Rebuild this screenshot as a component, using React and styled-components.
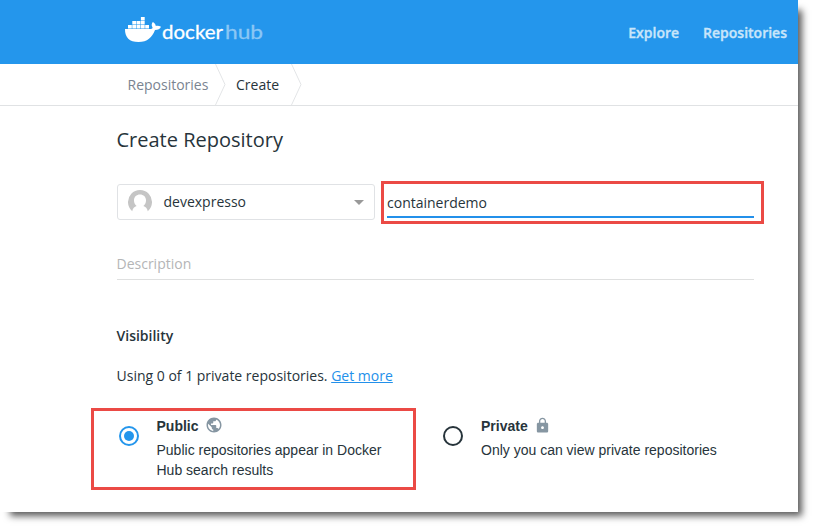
import React from "react";
import styled, { createGlobalStyle } from "styled-components";

const GlobalStyle = createGlobalStyle`
  * { box-sizing: border-box; }
  body { margin: 0; background: #fff; }
`;

const Canvas = styled.div`
  width: 813px;
  height: 527px;
  overflow: hidden;
  background: #fff;
`;

const Page = styled.div`
  width: 798px;
  height: 512px;
  background: #fff;
  box-shadow: 7px 7px 7px -3px rgba(0, 0, 0, 0.65);
  font-family: "Open Sans", "Noto Sans", sans-serif;
  font-size: 14px;
  line-height: 20px;
  color: #27343b;
`;

const Header = styled.header`
  display: flex;
  align-items: center;
  justify-content: space-between;
  height: 64px;
  padding: 0 11px 0 124px;
  background: #2496ec;
`;

const Logo = styled.svg`
  display: block;
  width: 142px;
  height: 32px;
`;

const Nav = styled.nav`
  display: flex;
  gap: 24px;
  padding-top: 2px;
`;

const NavLink = styled.a`
  font-weight: 600;
  color: #c8e5fa;
  -webkit-text-stroke: 0.35px #c8e5fa;
`;

const Breadcrumb = styled.div`
  display: flex;
  height: 42px;
  padding-left: 127.5px;
  border-bottom: 1px solid #e0e2e4;
`;

const Crumb = styled.a`
  display: flex;
  align-items: center;
  width: ${(p) => p.$width}px;
  color: ${(p) => (p.$active ? "#27343b" : "#7a8491")};
`;

const Chevron = styled.svg`
  display: block;
  width: 12px;
  height: 41px;
  margin-right: 9.5px;
`;

const Content = styled.main`
  padding: 22px 44px 0 117px;
`;

const Title = styled.h1`
  margin: 0 0 0 -0.5px;
  font-size: 20px;
  line-height: 24px;
  font-weight: 400;
`;

const NameRow = styled.div`
  display: flex;
  align-items: flex-start;
  gap: 6px;
  margin: 29px -10px 0 0;
`;

const Select = styled.div`
  display: flex;
  align-items: center;
  width: 258px;
  height: 36px;
  margin-top: 3px;
  padding: 0 10px;
  border: 1px solid #e0e2e5;
  border-radius: 3px;
`;

const Avatar = styled.svg`
  width: 24px;
  height: 24px;
  margin-right: 11.5px;
`;

const SelectValue = styled.span`
  flex: 1;
`;

const Arrow = styled.svg`
  width: 10px;
  height: 5px;
`;

const Highlight = styled.div`
  border: 3px solid #eb4a45;
  flex: 0 0 auto;
`;

const NameHighlight = styled(Highlight)`
  width: 383px;
  height: 43px;
  padding: 8px 7px 3px 3px;
`;

const NameInput = styled.div`
  height: 26px;
  padding-top: 1px;
  border-bottom: 2px solid #2390ea;
`;

const Description = styled.div`
  height: 26px;
  margin-top: 30px;
  border-bottom: 1px solid #dfe0e0;
  color: #b4b5b6;
  text-indent: -0.5px;
`;

const Subtitle = styled.h2`
  margin: 46px 0 0 -0.5px;
  font-size: 14px;
  line-height: 20px;
  font-weight: 600;
`;

const Usage = styled.p`
  margin: 20px 0 0 -0.5px;
`;

const Link = styled.a`
  color: #2390ea;
  text-decoration: underline;
`;

const Options = styled.div`
  display: flex;
  gap: 26px;
  margin: 22px -20px 0 -26px;
  font-family: "Liberation Sans", Arial, sans-serif;
`;

const PublicHighlight = styled(Highlight)`
  width: 325px;
  height: 82px;
  padding: 5px 0 0 24px;
`;

const PrivateSlot = styled.div`
  padding-top: 8px;
`;

const Option = styled.div`
  display: flex;
  gap: ${(p) => p.$gap}px;
`;

const Radio = styled.svg`
  flex: 0 0 auto;
  width: 22px;
  height: 22px;
  margin-top: 9px;
`;

const OptionLabel = styled.div`
  display: flex;
  align-items: center;
  gap: 6.5px;
  height: 20px;
  margin-bottom: 4px;
  font-weight: 700;
`;

const OptionIcon = styled.svg`
  display: block;
  width: ${(p) => p.$size}px;
  height: ${(p) => p.$size}px;
  margin-top: -2px;
  fill: #8696a2;
`;

const OptionText = styled.div`
  white-space: nowrap;
`;

function DockerHubLogo() {
  return (
    <Logo viewBox="0 0 142 32" role="img" aria-label="docker hub">
      <g fill="#fff">
        <path d="M1 13H25.5C27.8 13 29.2 12.4 28.4 11.2C27.3 9.4 27.6 7.6 28.8 6C30.6 7 31.6 8.4 31.8 10C33.6 9.5 35.4 9.8 37 10.8C36 13 34 14 31 14C28 21.5 23.5 26 14.5 26C5.5 26 .8 21.5 1 13Z" />
        <path d="M4 9h3.8v3.4H4zM8.3 9h3.8v3.4H8.3zM12.6 9h3.8v3.4h-3.8zM16.9 9h3.8v3.4h-3.8zM21.2 9H25v3.4h-3.8zM8.3 5h3.8v3.4H8.3zM12.6 5h3.8v3.4h-3.8zM16.9 5h3.8v3.4h-3.8zM16.9 1h3.8v3.4h-3.8z" />
      </g>
      <g fontFamily="Lato, sans-serif" fontSize="20" strokeWidth=".3">
        <text x="38" y="23.2" textLength="61" lengthAdjust="spacingAndGlyphs" fill="#fff" stroke="#fff">docker</text>
        <text x="101" y="23.2" textLength="38" lengthAdjust="spacingAndGlyphs" fill="#8bc7f5" stroke="#8bc7f5">hub</text>
      </g>
    </Logo>
  );
}

function CrumbChevron() {
  return (
    <Chevron viewBox="0 0 12 41">
      <path d="M.5 0L10 20.5L.5 41" fill="none" stroke="#e3e5e7" />
    </Chevron>
  );
}

function RadioMark({ checked }) {
  const color = checked ? "#2496ec" : "#27343b";
  return (
    <Radio viewBox="0 0 22 22">
      <circle cx="11" cy="11" r="9" fill="none" stroke={color} strokeWidth="2" />
      {checked && <circle cx="11" cy="11" r="5" fill={color} />}
    </Radio>
  );
}

export default function App() {
  return (
    <Canvas>
      <GlobalStyle />
      <Page>
        <Header>
          <DockerHubLogo />
          <Nav>
            <NavLink>Explore</NavLink>
            <NavLink>Repositories</NavLink>
          </Nav>
        </Header>
        <Breadcrumb>
          <Crumb $width={87}>Repositories</Crumb>
          <CrumbChevron />
          <Crumb $active $width={54.5}>Create</Crumb>
          <CrumbChevron />
        </Breadcrumb>
        <Content>
          <Title>Create Repository</Title>
          <NameRow>
            <Select>
              <Avatar viewBox="0 0 24 24">
                <path d="M4.2 21.2A12 12 0 1 1 19.8 21.2C19.2 18.3 17.7 16.7 15.4 15.9C17.2 14.4 18 12.5 18 10.2C18 6.9 15.5 4.5 12 4.5S6 6.9 6 10.2C6 12.5 6.8 14.4 8.6 15.9C6.3 16.7 4.8 18.3 4.2 21.2Z" fill="#c5c5c5" />
              </Avatar>
              <SelectValue>devexpresso</SelectValue>
              <Arrow viewBox="0 0 10 5"><path d="M0 0h10L5 5z" fill="#999" /></Arrow>
            </Select>
            <NameHighlight>
              <NameInput>containerdemo</NameInput>
            </NameHighlight>
          </NameRow>
          <Description>Description</Description>
          <Subtitle>Visibility</Subtitle>
          <Usage>Using 0 of 1 private repositories. <Link>Get more</Link></Usage>
          <Options>
            <PublicHighlight>
              <Option $gap={16.5}>
                <RadioMark checked />
                <div>
                  <OptionLabel>
                    Public
                    <OptionIcon $size={18} viewBox="0 0 24 24">
                      <path d="M12 2C6.48 2 2 6.48 2 12s4.48 10 10 10 10-4.48 10-10S17.52 2 12 2zm-1 17.93c-3.95-.49-7-3.85-7-7.93 0-.62.08-1.21.21-1.79L9 15v1c0 1.1.9 2 2 2v1.93zm6.9-2.54c-.26-.81-1-1.39-1.9-1.39h-1v-3c0-.55-.45-1-1-1H8v-2h2c.55 0 1-.45 1-1V7h2c1.1 0 2-.9 2-2v-.41c2.93 1.19 5 4.06 5 7.41 0 2.08-.8 3.97-2.1 5.39z" />
                    </OptionIcon>
                  </OptionLabel>
                  <OptionText>Public repositories appear in Docker<br />Hub search results</OptionText>
                </div>
              </Option>
            </PublicHighlight>
            <PrivateSlot>
              <Option $gap={17}>
                <RadioMark />
                <div>
                  <OptionLabel>
                    Private
                    <OptionIcon $size={17} viewBox="0 0 24 24">
                      <path d="M18 8h-1V6c0-2.76-2.24-5-5-5S7 3.24 7 6v2H6c-1.1 0-2 .9-2 2v10c0 1.1.9 2 2 2h12c1.1 0 2-.9 2-2V10c0-1.1-.9-2-2-2zm-6 9c-1.1 0-2-.9-2-2s.9-2 2-2 2 .9 2 2-.9 2-2 2zm3.1-9H8.9V6c0-1.71 1.39-3.1 3.1-3.1 1.71 0 3.1 1.39 3.1 3.1v2z" />
                    </OptionIcon>
                  </OptionLabel>
                  <OptionText>Only you can view private repositories</OptionText>
                </div>
              </Option>
            </PrivateSlot>
          </Options>
        </Content>
      </Page>
    </Canvas>
  );
}
